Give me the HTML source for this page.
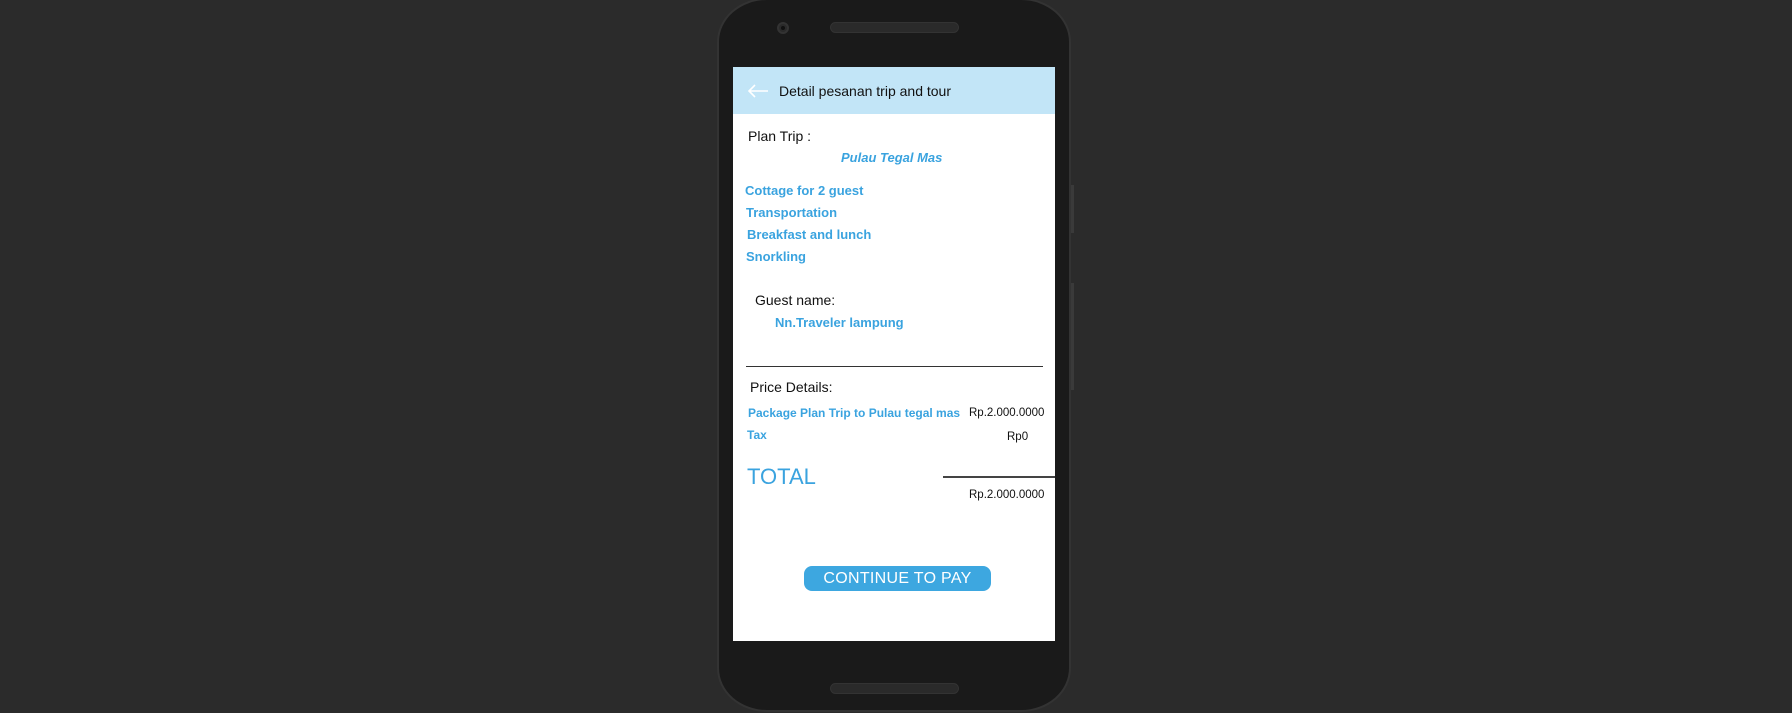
<!DOCTYPE html>
<html><head><meta charset="utf-8"><style>
*{margin:0;padding:0;box-sizing:border-box}
body{width:1792px;height:713px;background:#2b2b2b;position:relative;overflow:hidden;font-family:"Liberation Sans",sans-serif}
.phone{position:absolute;left:717px;top:-2px;width:354px;height:714px;background:#1a1a1a;border:2px solid #333;border-radius:50px/44px}
.btn1{position:absolute;left:1071px;top:185px;width:3px;height:48px;background:#3a3a3a}
.btn2{position:absolute;left:1071px;top:283px;width:3px;height:107px;background:#3a3a3a}
.cam{position:absolute;left:777px;top:22px;width:12px;height:12px;border-radius:50%;background:#2a2a2a;border:2px solid #333}
.cam:after{content:"";position:absolute;left:2px;top:2px;width:4px;height:4px;border-radius:50%;background:#111}
.spk{position:absolute;left:830px;width:129px;height:11px;border-radius:6px;background:#2a2a2a;border:1px solid #333}
.screen{position:absolute;left:733px;top:67px;width:322px;height:574px;background:#fff}
.hdr{position:absolute;left:0;top:0;width:322px;height:47px;background:#c2e5f7}
.t{position:absolute;white-space:nowrap;line-height:16px}
.b{color:#3aa3df;font-weight:bold;font-size:13px}
.k{color:#111;font-size:14px}
.r{color:#111;font-size:11.5px}
</style></head><body>
<div class="phone"></div>
<div class="btn1"></div><div class="btn2"></div>
<div class="cam"></div>
<div class="spk" style="top:22px"></div>
<div class="spk" style="top:683px"></div>
<div class="screen">
<div class="hdr">
<svg style="position:absolute;left:14px;top:17px" width="22" height="14" viewBox="0 0 22 14"><path d="M21 7H2M8 1L2 7l6 6" stroke="#fff" stroke-width="1.6" fill="none"/></svg>
<div class="t" style="left:46px;top:16px;font-size:14px;color:#111">Detail pesanan trip and tour</div>
</div>
<div class="t k" style="left:15px;top:61px">Plan Trip :</div>
<div class="t b" style="left:108px;top:83px;font-style:italic">Pulau Tegal Mas</div>
<div class="t b" style="left:12px;top:116px">Cottage for 2 guest</div>
<div class="t b" style="left:13px;top:138px">Transportation</div>
<div class="t b" style="left:14px;top:160px">Breakfast and lunch</div>
<div class="t b" style="left:13px;top:182px">Snorkling</div>
<div class="t k" style="left:22px;top:225px">Guest name:</div>
<div class="t b" style="left:42px;top:248px">Nn.Traveler lampung</div>
<div style="position:absolute;left:13px;top:299px;width:297px;height:1px;background:#333"></div>
<div class="t k" style="left:17px;top:312px">Price Details:</div>
<div class="t b" style="left:15px;top:338px;font-size:12px">Package Plan Trip to Pulau tegal mas</div>
<div class="t r" style="left:236px;top:338px">Rp.2.000.0000</div>
<div class="t b" style="left:14px;top:360px;font-size:12px">Tax</div>
<div class="t r" style="left:274px;top:362px">Rp0</div>
<div class="t" style="left:14px;top:398px;font-size:22px;line-height:24px;color:#3aa3df">TOTAL</div>
<div style="position:absolute;left:210px;top:409px;width:112px;height:1.5px;background:#444"></div>
<div class="t r" style="left:236px;top:420px">Rp.2.000.0000</div>
<div style="position:absolute;left:71px;top:499px;width:187px;height:25px;border-radius:8px;background:#3da7e0;color:#fff;font-size:16px;line-height:25px;text-align:center;letter-spacing:.3px">CONTINUE TO PAY</div>
</div>
</body></html>
